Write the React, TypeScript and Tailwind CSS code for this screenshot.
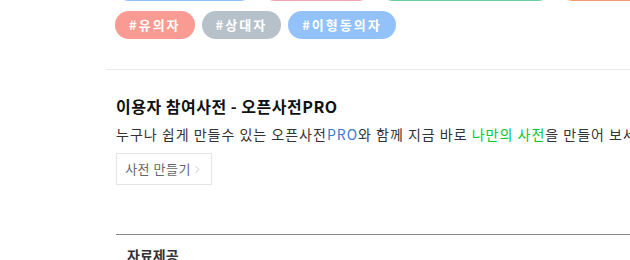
import { ChevronRight } from "lucide-react";

// tags of the row above, only their lower edge is in view
const topTags = [
  { color: "bg-[#93c2fb]", width: "w-[139px]" },
  { color: "bg-[#f4a3b4]", width: "w-[111px]" },
  { color: "bg-[#6fcf9f]", width: "w-[173px]" },
  { color: "bg-[#f59a6f]", width: "w-[120px]" },
];

const tags = [
  { label: "#유의자", color: "bg-[#f99b92]" },
  { label: "#상대자", color: "bg-[#b6c1c9]" },
  { label: "#이형동의자", color: "bg-[#93c2fb]" },
];

export default function App() {
  return (
    <div
      className="w-[630px] h-[260px] overflow-hidden bg-white"
      style={{ fontFamily: '"Noto Sans CJK KR", "Noto Sans", sans-serif' }}
    >
      <div className="pl-[115px] -mt-[27px] flex gap-[7px]">
        {topTags.map((t, i) => (
          <span
            key={i}
            className={`${t.color} ${t.width} shrink-0 h-[28px] rounded-full`}
          />
        ))}
      </div>

      <div className="pl-[115px] mt-[10px] flex gap-[7px]">
        {tags.map((t) => (
          <span
            key={t.label}
            className={`${t.color} h-[28px] px-[14px] rounded-full flex items-center text-white text-[13px] font-bold tracking-[2px]`}
          >
            {t.label}
          </span>
        ))}
      </div>

      <div className="ml-[106px] mt-[30px] border-t border-[#ebebeb]" />

      {/* open dictionary promo */}
      <div className="pl-[116px] pt-[25px]">
        <h3 className="text-[16px] font-bold text-[#111] leading-[22px] tracking-[0.5px]">
          이용자 참여사전 - 오픈사전PRO
        </h3>
        <p className="mt-[7px] text-[14px] text-[#333] leading-[20px] tracking-[1px] whitespace-nowrap">
          누구나 쉽게 만들수 있는 오픈사전
          <span className="text-[#3d7cc9]">PRO</span>와 함께 지금 바로{" "}
          <span className="text-[#00c73c]">나만의 사전</span>을 만들어 보세요
        </p>
        <button className="mt-[9px] h-[32px] w-[96px] border border-[#e5e5e5] flex items-center justify-center gap-[1px] text-[13px] text-[#666] tracking-[0.5px]">
          사전 만들기
          <ChevronRight className="w-[11px] h-[11px] text-[#aaa]" strokeWidth={1.5} />
        </button>
      </div>

      <div className="ml-[116px] mt-[49px] border-t border-[#888]" />
      <div className="pl-[127px] pt-[10px] text-[14px] font-bold text-[#333] leading-[20px]">
        자료제공
      </div>
    </div>
  );
}
